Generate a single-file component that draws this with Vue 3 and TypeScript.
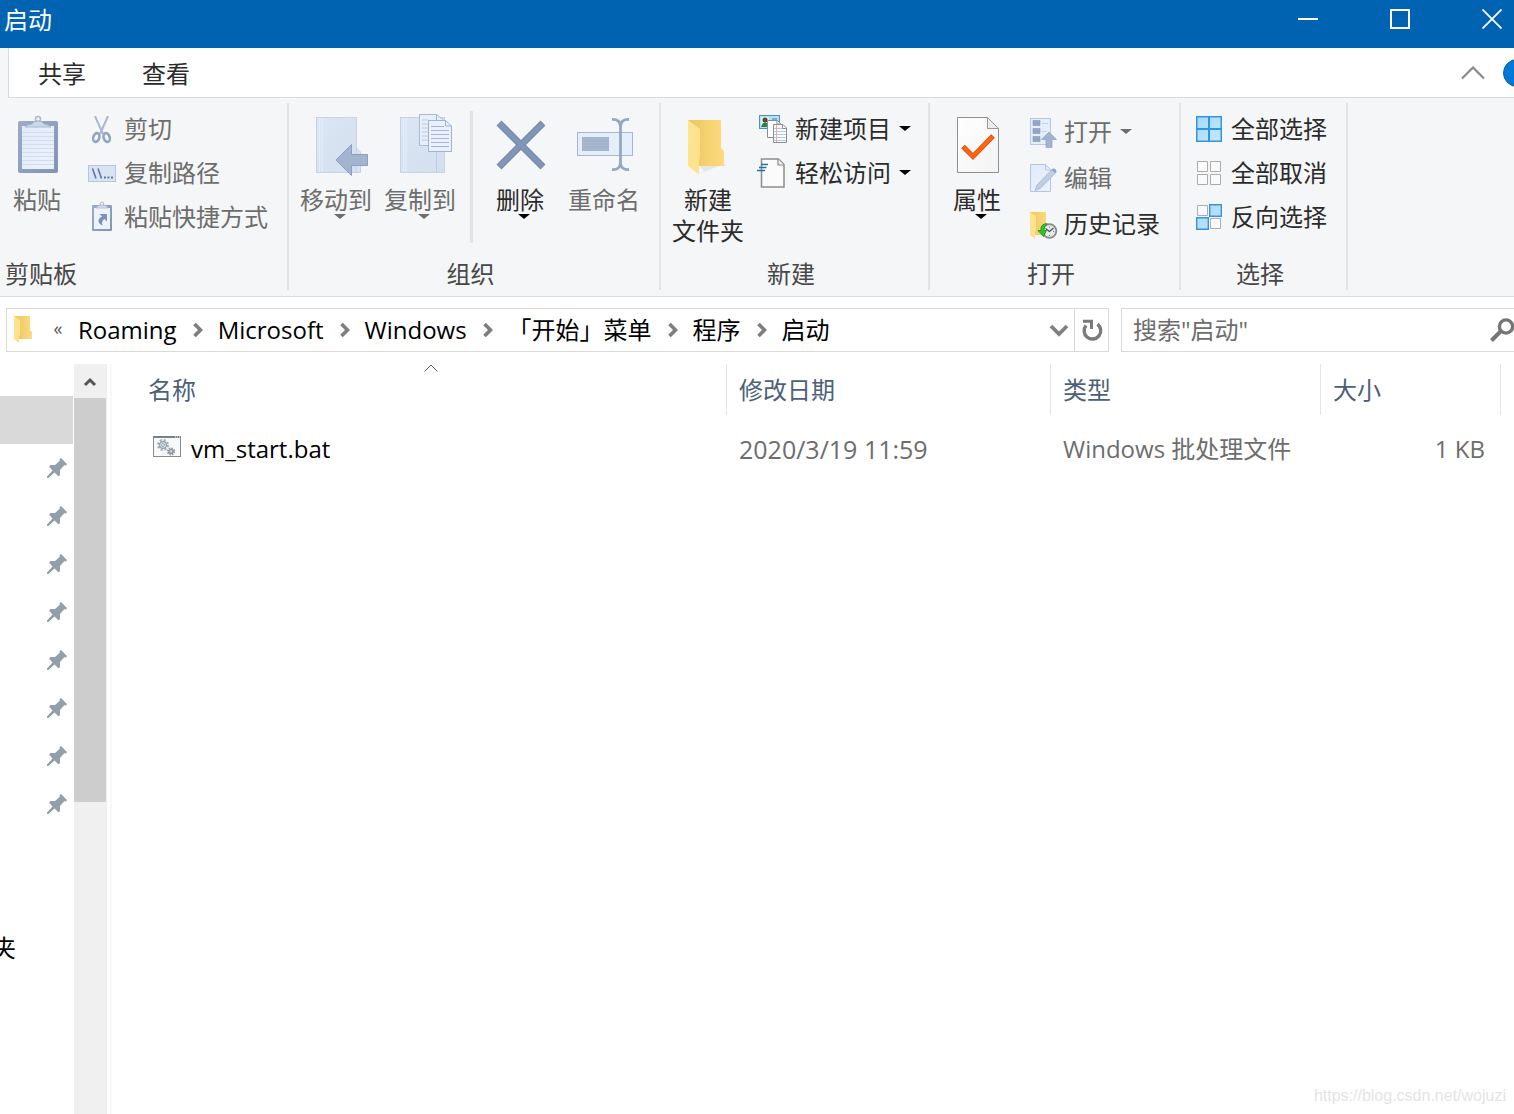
<script setup lang="ts">
interface Command {
  label: string
  icon: string
  disabled?: boolean
  menu?: boolean
}

interface FileRow {
  name: string
  date: string
  kind: string
  size: string
}

const clipboard: Command[] = [
  { label: '剪切', icon: 'cut', disabled: true },
  { label: '复制路径', icon: 'path', disabled: true },
  { label: '粘贴快捷方式', icon: 'shortcut', disabled: true },
]
const create: Command[] = [
  { label: '新建项目', icon: 'item', menu: true },
  { label: '轻松访问', icon: 'access', menu: true },
]
const open: Command[] = [
  { label: '打开', icon: 'open', disabled: true, menu: true },
  { label: '编辑', icon: 'edit', disabled: true },
  { label: '历史记录', icon: 'history' },
]
const select: Command[] = [
  { label: '全部选择', icon: 'all' },
  { label: '全部取消', icon: 'none' },
  { label: '反向选择', icon: 'invert' },
]

const crumbs: string[] = ['Roaming', 'Microsoft', 'Windows', '「开始」菜单', '程序', '启动']
const pinned = 8
const files: FileRow[] = [
  { name: 'vm_start.bat', date: '2020/3/19 11:59', kind: 'Windows 批处理文件', size: '1 KB' },
]
</script>

<template>
  <div class="window">
    <svg class="defs" aria-hidden="true">
      <defs>
        <linearGradient id="g-board" x1="0" y1="0" x2="1" y2="1">
          <stop offset="0" stop-color="#9dabc6" /><stop offset="1" stop-color="#8294b4" />
        </linearGradient>
        <linearGradient id="g-paper" x1="0" y1="0" x2="1" y2="1">
          <stop offset="0" stop-color="#e0eafa" /><stop offset="1" stop-color="#edf3fc" />
        </linearGradient>
        <linearGradient id="g-pale" x1="0" y1="0" x2="1" y2="1">
          <stop offset="0" stop-color="#dce6f4" /><stop offset="1" stop-color="#d3dfef" />
        </linearGradient>
        <linearGradient id="g-back" x1="0" y1="0" x2="1" y2="0">
          <stop offset="0" stop-color="#ecc65f" /><stop offset="1" stop-color="#fbdb80" />
        </linearGradient>
        <linearGradient id="g-flap" x1="0" y1="0" x2="1" y2="1">
          <stop offset="0" stop-color="#ffe592" /><stop offset="1" stop-color="#fde08a" />
        </linearGradient>
        <linearGradient id="g-page" x1="0" y1="0" x2="1" y2="1">
          <stop offset="0" stop-color="#ffffff" /><stop offset="1" stop-color="#f3f3f3" />
        </linearGradient>
        <linearGradient id="g-cell" x1="0" y1="0" x2="1" y2="1">
          <stop offset="0" stop-color="#a9dafc" /><stop offset="1" stop-color="#c3e7ff" />
        </linearGradient>
      </defs>

      <symbol id="folder" viewBox="0 0 20 28">
        <path d="M0 0H16V14L18 16V23H5Z" fill="url(#g-back)" />
        <path d="M0 0L6 4V19L5 20V27L0 23Z" fill="url(#g-flap)" />
      </symbol>

      <symbol id="cut" viewBox="0 0 28 28">
        <path d="M7 0L15 18M20 0L12 18" fill="none" stroke="#a9b8d0" stroke-width="2" />
        <ellipse cx="8.300" cy="21.500" rx="3" ry="4.500" transform="rotate(18 8.300 21.500)" fill="none" stroke="#92a4c4" stroke-width="2.600" />
        <ellipse cx="18.700" cy="21.500" rx="3" ry="4.500" transform="rotate(-18 18.700 21.500)" fill="none" stroke="#92a4c4" stroke-width="2.600" />
      </symbol>
      <symbol id="path" viewBox="0 0 28 28">
        <rect x=".5" y="5.500" width="27" height="16" fill="#d9e4f3" stroke="#b6c6dd" />
        <path d="M4.500 8.500L8 18.500M10 8.500L13.500 18.500" stroke="#5f76a0" stroke-width="1.600" fill="none" />
        <path d="M16 17.500h2M19.500 17.500h2M23 17.500h2" stroke="#5f76a0" stroke-width="2" />
      </symbol>
      <symbol id="shortcut" viewBox="0 0 28 28" overflow="visible">
        <circle cx="14" cy="0" r="1.800" fill="none" stroke="#a9b8d0" />
        <rect x="4" y="1" width="20" height="26" rx="1" fill="url(#g-board)" />
        <rect x="6" y="4" width="16" height="21" fill="#edf3fd" />
        <path d="M8 4Q9 1 14 1Q19 1 20 4Z" fill="#d6e0f0" stroke="#9fb0cc" stroke-width=".7" />
        <path d="M11.500 10H19V17.500L16.500 15Q13 17 14.500 21.500Q10 19.500 10.500 16Q11 13.500 14 12.500Z" fill="#7c91b8" />
      </symbol>
      <symbol id="item" viewBox="0 0 28 28" overflow="visible">
        <rect x=".5" y="-.5" width="20" height="13" fill="#b8e0f5" stroke="#4a93bd" />
        <rect x="2" y="1" width="8" height="10" fill="#dff0e4" />
        <circle cx="6" cy="4" r="2.500" fill="#5b4636" /><path d="M2 11Q3 6.500 6 6.500Q9 6.500 10 11Z" fill="#2f7d4f" />
        <path d="M13 3H18M13 6H18" stroke="#3181b4" />
        <path d="M8.500 4.500H18.500L21.500 7.500V21.500H8.500Z" fill="#fff" stroke="#8e8e8e" />
        <path d="M18 4.500V8H21.500" fill="none" stroke="#8e8e8e" />
        <path d="M14.500 8.500H24L27.500 12V26.500H14.500Z" fill="#fff" stroke="#8e8e8e" />
        <path d="M23.500 8.500V12.500H27.500" fill="none" stroke="#8e8e8e" />
        <path d="M15 12.500H23M15 15.500H27M15 18.500H27M15 21.500H27M15 24.500H27" stroke="#a9cbf0" />
        <path d="M17.500 9V26" stroke="#f0a8a8" />
      </symbol>
      <symbol id="access" viewBox="0 0 28 28" overflow="visible">
        <path d="M2.500 -1H19.500L25 4.500V27H2.500Z" fill="#fbfbfb" stroke="#8d8d8d" stroke-width="1.500" />
        <path d="M19 -1V5H25" fill="#eee" stroke="#8d8d8d" stroke-width="1.200" />
        <path d="M2 4.500H9M0 7.500H7.500M-2 10.500H6" stroke="#256fa8" stroke-width="1.500" />
      </symbol>
      <symbol id="open" viewBox="0 0 28 28" overflow="visible">
        <rect x="2.500" y="-.5" width="20" height="26" fill="#e4edfa" stroke="#b9c8df" />
        <path d="M5 1.500h7v5H5zM5 9.500h7v5H5zM5 17.500h7v5H5z" fill="#94a6c6" stroke="#8497ba" stroke-width=".6" />
        <path d="M14 4.500H20M14 12.500H18" stroke="#c3d0e4" />
        <path d="M21 13L28.500 20.500H24V28.500H18V20.500H13.500Z" fill="#a3b2ce" stroke="#8fa1c2" stroke-width=".7" />
      </symbol>
      <symbol id="edit" viewBox="0 0 28 28" overflow="visible">
        <path d="M2.500 -.5H17.500L22.500 4.500V26.500H2.500Z" fill="url(#g-paper)" stroke="#b5c5de" />
        <path d="M17.500 -.5V5H22.500" fill="none" stroke="#b5c5de" />
        <path d="M7 25.500L9 20L24.500 4L28 7.500L12 23.500Z" fill="#c0cee4" stroke="#9fb1ce" stroke-width=".8" />
        <path d="M23.500 5L25 3.500Q28 3 28.500 6.500L27 8Z" fill="#92a5c6" />
      </symbol>
      <symbol id="history" viewBox="0 0 28 28" overflow="visible">
        <path d="M2 1H18V15L19 16V24H7Z" fill="url(#g-back)" />
        <path d="M2 1L8 5V20L7 21V28L2 24Z" fill="url(#g-flap)" />
        <circle cx="21.500" cy="20" r="6.800" fill="#e6e8e9" stroke="#868b8e" stroke-width="1.800" />
        <path d="M17.500 17.500L21.500 20.500L25.500 17" fill="none" stroke="#4c5052" stroke-width="1.200" />
        <path d="M21.500 15.500v1M21.500 24v1M17 20.500h1M25 20.500h1" stroke="#6d7173" />
        <path d="M19 12.500Q12 13 13 19.500H10L15.500 25.500L18.500 19.500H16Q15.500 16 19 12.500Z" fill="#2fc42f" stroke="#17911a" stroke-width=".8" />
      </symbol>
      <symbol id="all" viewBox="0 0 28 28">
        <rect x="1" y="0" width="26" height="26" fill="#3295e0" />
        <path d="M2.500 1.500h10.500v10.500h-10.500zM15 1.500h10.500v10.500H15zM2.500 14h10.500v10.500h-10.500zM15 14h10.500v10.500H15z" fill="url(#g-cell)" />
      </symbol>
      <symbol id="none" viewBox="0 0 28 28">
        <path d="M2.500 1.500h10v10h-10zM15.500 1.500h10v10h-10zM2.500 14.500h10v10h-10zM15.500 14.500h10v10h-10z" fill="#fafafa" stroke="#acacac" />
      </symbol>
      <symbol id="invert" viewBox="0 0 28 28">
        <path d="M2.500 1.500h10v10h-10zM15.500 14.500h10v10h-10z" fill="#fafafa" stroke="#acacac" />
        <path d="M14.700 .7h11.600v11.600H14.700zM1.700 13.700h11.600v11.600H1.700z" fill="#b5dffd" stroke="#3295e0" stroke-width="1.400" />
      </symbol>
      <symbol id="pin" viewBox="0 0 20 20">
        <path d="M14 0L20 6L19 7.500L17.500 7L13 12V17L11.500 18.500L7.500 14.500L1.500 20H0V18.500L5.500 12.500L2 8.500L3.500 7H8L13 2.500L12.500 1Z" fill="#939fa6" />
      </symbol>
    </svg>

    <header class="titlebar">
      <h1 class="title">启动</h1>
      <div class="controls">
        <button type="button" aria-label="最小化"><svg width="20" height="20"><path d="M0 10H20" stroke="#fff" stroke-width="2" /></svg></button>
        <button type="button" aria-label="最大化"><svg width="20" height="20"><rect x="1" y="1" width="18" height="18" fill="none" stroke="#fff" stroke-width="2" /></svg></button>
        <button type="button" aria-label="关闭"><svg width="20" height="20"><path d="M.5 .5L19.500 19.500M19.500 .5L.5 19.500" stroke="#fff" stroke-width="1.800" /></svg></button>
      </div>
    </header>

    <nav class="tabs">
      <button type="button" class="tab">共享</button>
      <button type="button" class="tab">查看</button>
      <button type="button" class="collapse" aria-label="折叠功能区">
        <svg width="24" height="14"><path d="M1 12.500L12 1.500L23 12.500" fill="none" stroke="#8a8a8a" stroke-width="2.200" /></svg>
      </button>
      <button type="button" class="help" aria-label="帮助">
        <svg width="28" height="28"><circle cx="14" cy="14" r="13.500" fill="#0078d7" stroke="#0a5ea8" /></svg>
      </button>
    </nav>

    <section class="ribbon">
      <div class="group clipboard">
        <div class="body">
          <button type="button" class="large paste" disabled>
            <svg class="big" viewBox="0 0 64 64">
              <rect x="13" y="8" width="40" height="52" rx="2" fill="url(#g-board)" />
              <rect x="17" y="13" width="32" height="43" fill="url(#g-paper)" />
              <path d="M17 19.500H49M17 23.500H49M17 27.500H49M17 31.500H49M17 35.500H49M17 39.500H49M17 43.500H49M17 47.500H49M17 51.500H49" stroke="#d3dded" />
              <circle cx="33" cy="6" r="2.500" fill="none" stroke="#a9b8d0" stroke-width="1.500" />
              <path d="M20 14Q22 11.500 27 11Q28.500 8 33 8Q37.500 8 39 11Q44 11.500 46 14Z" fill="#ccd7e8" stroke="#9fb0cb" stroke-width=".8" />
            </svg>
            <span>粘贴</span>
          </button>
          <ul class="small-list">
            <li v-for="c in clipboard" :key="c.label">
              <button type="button" class="small" :disabled="c.disabled">
                <svg class="ico"><use :href="'#' + c.icon" /></svg><span>{{ c.label }}</span>
              </button>
            </li>
          </ul>
        </div>
        <div class="caption">剪贴板</div>
      </div>

      <div class="group organize">
        <div class="body">
          <button type="button" class="large" disabled>
            <svg class="big" viewBox="0 0 64 64">
              <path d="M48.500 39L52.500 35L56.500 39V59.500H48.500Z" fill="#d9e3f2" stroke="#c3d1e6" />
              <rect x="12.500" y="4.500" width="40" height="55" fill="url(#g-pale)" stroke="#c6d4e8" />
              <path d="M15.500 5V59M18 5V59" stroke="#e6eefa" />
              <path d="M32 47L47.500 31.500V41.500H63.500V52.500H47.500V62.500Z" fill="#a4b3ce" stroke="#8c9fc1" />
            </svg>
            <span>移动到</span><i class="caret"></i>
          </button>
          <button type="button" class="large" disabled>
            <svg class="big" viewBox="0 0 64 64">
              <rect x="12.500" y="4.500" width="44" height="55" fill="url(#g-pale)" stroke="#c6d4e8" />
              <path d="M15.500 5V59M18 5V59" stroke="#e6eefa" /><path d="M48.500 30V59" stroke="#bccbe2" />
              <path d="M31.500 1.500H48.500L55.500 7V32.500H31.500Z" fill="#e7effb" stroke="#a8bad5" />
              <path d="M34 7H40M34 11H40M34 15H40M34 19H40M34 23H40M34 27H40" stroke="#b8c7df" />
              <path d="M40.500 7.500H57.500L63.500 13V38.500H40.500Z" fill="#eaf1fc" stroke="#9fb2cf" />
              <path d="M48.500 1.500V7.500M57.500 7.500V13H63.500" fill="none" stroke="#9fb2cf" />
              <path d="M43 13.500H56M43 17.500H61M43 21.500H61M43 25.500H61M43 29.500H61M43 33.500H61" stroke="#a5b5cf" />
            </svg>
            <span>复制到</span><i class="caret"></i>
          </button>
          <div class="divider"></div>
          <button type="button" class="large">
            <svg class="big" viewBox="0 0 64 64">
              <path d="M11 10L55 54M55 10L11 54" stroke="#7389b0" stroke-width="7" />
              <path d="M11.500 10.500L54.500 53.500M54.500 10.500L11.500 53.500" stroke="#8195b7" stroke-width="5" />
            </svg>
            <span>删除</span><i class="caret"></i>
          </button>
          <button type="button" class="large" disabled>
            <svg class="big" viewBox="0 0 64 64">
              <rect x="5.500" y="19.500" width="55" height="23" fill="#e5eefb" stroke="#a5b7d3" />
              <rect x="10" y="24" width="27" height="14" fill="#a5b4cf" />
              <path d="M40 6.500Q48.500 6 48.500 14V49.500Q48.500 57 40 56.500M57 6.500Q48.500 6 48.500 14V49.500Q48.500 57 57 56.500" fill="none" stroke="#95a7c6" stroke-width="2.800" />
            </svg>
            <span>重命名</span>
          </button>
        </div>
        <div class="caption">组织</div>
      </div>

      <div class="group create">
        <div class="body">
          <button type="button" class="large">
            <svg class="big" viewBox="0 0 64 64">
              <path d="M23 61L28 58L24 53H51L48 51Z" fill="#e6e6e6" />
              <path d="M12 7H45V35L48 38V53H23Z" fill="url(#g-back)" />
              <path d="M12 7L24 16V45L23 47V61.500L12 53Z" fill="url(#g-flap)" />
            </svg>
            <span>新建<br />文件夹</span>
          </button>
          <ul class="small-list">
            <li v-for="c in create" :key="c.label">
              <button type="button" class="small" :disabled="c.disabled">
                <svg class="ico"><use :href="'#' + c.icon" /></svg><span>{{ c.label }}</span><i class="caret"></i>
              </button>
            </li>
          </ul>
        </div>
        <div class="caption">新建</div>
      </div>

      <div class="group open">
        <div class="body">
          <button type="button" class="large">
            <svg class="big" viewBox="0 0 64 64">
              <path d="M12.500 4.500H42.500L53.500 15.500V59.500H12.500Z" fill="url(#g-page)" stroke="#8f8f8f" />
              <path d="M42.500 4.500V15.500H53.500Z" fill="#ececec" stroke="#9a9a9a" />
              <path d="M18 33.500L28 43.500L48 23" fill="none" stroke="#d9480a" stroke-width="5" />
              <path d="M18.500 34L28 43.500L47.500 23.500" fill="none" stroke="#ff6511" stroke-width="3.600" />
            </svg>
            <span>属性</span><i class="caret"></i>
          </button>
          <ul class="small-list roomy">
            <li v-for="c in open" :key="c.label">
              <button type="button" class="small" :disabled="c.disabled">
                <svg class="ico"><use :href="'#' + c.icon" /></svg><span>{{ c.label }}</span><i v-if="c.menu" class="caret"></i>
              </button>
            </li>
          </ul>
        </div>
        <div class="caption">打开</div>
      </div>

      <div class="group select">
        <div class="body">
          <ul class="small-list">
            <li v-for="c in select" :key="c.label">
              <button type="button" class="small">
                <svg class="ico"><use :href="'#' + c.icon" /></svg><span>{{ c.label }}</span>
              </button>
            </li>
          </ul>
        </div>
        <div class="caption">选择</div>
      </div>
    </section>

    <div class="location">
      <div class="address">
        <svg class="folder" width="20" height="28"><use href="#folder" /></svg>
        <button type="button" class="overflow">«</button>
        <ol class="crumbs">
          <li v-for="(crumb, i) in crumbs" :key="crumb">
            <svg v-if="i > 0" width="10" height="16"><path d="M1.500 2L7.500 8L1.500 14" fill="none" stroke="#7d7d7d" stroke-width="3.600" /></svg>
            <a href="#">{{ crumb }}</a>
          </li>
        </ol>
        <button type="button" class="drop" aria-label="以前的位置">
          <svg width="20" height="14"><path d="M2 2L10 10L18 2" fill="none" stroke="#808080" stroke-width="3.800" /></svg>
        </button>
        <button type="button" class="refresh" aria-label="刷新">
          <svg width="22" height="24">
            <path d="M16.500 6.200A8.300 8.300 0 1 1 5 7.500" fill="none" stroke="#7a7a7a" stroke-width="3.400" />
            <path d="M2 3.200H10.500V11" fill="none" stroke="#7a7a7a" stroke-width="3" />
          </svg>
        </button>
      </div>
      <form class="search" @submit.prevent>
        <input type="search" aria-label="搜索" placeholder='搜索"启动"' />
        <svg width="24" height="24">
          <path d="M1.500 22.500L10.500 13.500" stroke="#757575" stroke-width="4" />
          <circle cx="16" cy="8.500" r="6.600" fill="none" stroke="#757575" stroke-width="3.400" />
        </svg>
      </form>
    </div>

    <main class="content">
      <nav class="tree" aria-label="快速访问">
        <a href="#" class="node current" aria-label="快速访问"></a>
        <a v-for="n in pinned" :key="n" href="#" class="node" aria-label="已固定的文件夹">
          <svg width="20" height="20"><use href="#pin" /></svg>
        </a>
        <a href="#" class="node last"><span>夹</span></a>
      </nav>
      <div class="scrollbar">
        <button type="button" aria-label="向上滚动">
          <svg width="14" height="12"><path d="M2 10L7 5L12 10" fill="none" stroke="#555" stroke-width="3" /></svg>
        </button>
        <div class="thumb"></div>
      </div>
      <div class="list">
        <table>
          <colgroup>
            <col /><col class="c-date" /><col class="c-kind" /><col class="c-size" />
          </colgroup>
          <thead>
            <tr>
              <th scope="col" class="name">
                名称
                <svg class="sort" width="14" height="8"><path d="M.5 7.500L7 1L13.500 7.500" fill="none" stroke="#5a5a5a" /></svg>
              </th>
              <th scope="col">修改日期</th>
              <th scope="col">类型</th>
              <th scope="col">大小</th>
            </tr>
          </thead>
          <tbody>
            <tr v-for="f in files" :key="f.name">
              <td class="name">
                <div class="file">
                  <svg width="28" height="21">
                    <rect x=".5" y=".5" width="27" height="20" fill="#f8f9fa" stroke="#868b8e" />
                    <path d="M0 1H28" stroke="#7b8083" stroke-width="2" />
                    <path d="M22 1h1M24 1h1M26 1h1" stroke="#fff" />
                    <circle cx="10" cy="9" r="4.800" fill="none" stroke="#a4b0b9" stroke-width="2.400" stroke-dasharray="2.200 1.570" />
                    <circle cx="10" cy="9" r="3.400" fill="#dbe2e7" stroke="#94a1ab" stroke-width="1.200" /><circle cx="10" cy="9" r="1.400" fill="#fff" stroke="#94a1ab" />
                    <circle cx="18" cy="15.500" r="3.200" fill="none" stroke="#8b97a0" stroke-width="1.800" stroke-dasharray="1.500 1.010" />
                    <circle cx="18" cy="15.500" r="2" fill="#cfd7dc" stroke="#7f8c96" stroke-width="1.200" />
                  </svg>
                  <span>{{ f.name }}</span>
                </div>
              </td>
              <td class="date">{{ f.date }}</td>
              <td>{{ f.kind }}</td>
              <td class="size">{{ f.size }}</td>
            </tr>
          </tbody>
        </table>
      </div>
    </main>

    <div class="watermark">https://blog.csdn.net/wojuzi</div>
  </div>
</template>

<style>
body {
  margin: 0;
  background: #fff;
}
</style>

<style scoped>
.window {
  position: relative;
  display: flex;
  flex-direction: column;
  min-height: 100vh;
  overflow: hidden;
  background: #fff;
  color: #000;
  font: 24px/32px "Open Sans", "Noto Sans CJK SC", sans-serif;
}
.defs {
  position: absolute;
  width: 0;
  height: 0;
}
button {
  margin: 0;
  padding: 0;
  border: 0;
  background: none;
  color: inherit;
  font: inherit;
}
ul,
ol {
  margin: 0;
  padding: 0;
  list-style: none;
}
a {
  color: inherit;
  text-decoration: none;
}
svg {
  display: block;
  flex: none;
}

.titlebar {
  display: flex;
  justify-content: space-between;
  height: 48px;
  background: #0063b1;
  color: #fff;
}
.title {
  margin: 0;
  padding: 4px 0 0 4px;
  font-size: 24px;
  font-weight: 400;
  line-height: 32px;
}
.controls {
  display: flex;
  align-items: flex-start;
  gap: 72px;
  padding: 9px 12px 0 0;
}

.tabs {
  display: flex;
  align-items: center;
  height: 49px;
  margin-left: 8px;
  border-left: 1px solid #dadbdc;
  border-bottom: 1px solid #dadbdc;
  box-shadow: -8px 0 0 #f5f6f7;
  color: #2b2b2b;
}
.tab {
  width: 104px;
  padding: 2px 0 0 2px;
}
.collapse {
  margin-left: auto;
}
.help {
  width: 11px;
  margin-left: 18px;
  overflow: hidden;
}

.ribbon {
  display: flex;
  padding: 5px 0 6px;
  border-bottom: 1px solid #dadbdc;
  background: #f5f6f7;
  color: #2b2b2b;
}
.group {
  display: flex;
  flex-direction: column;
  height: 187px;
  padding-left: 5px;
  border-right: 2px solid #e2e3e4;
  box-sizing: border-box;
  flex: none;
}
.clipboard {
  width: 289px;
}
.organize {
  width: 372px;
}
.create {
  width: 269px;
}
.open {
  width: 251px;
}
.select {
  width: 167px;
}
.body {
  display: flex;
  align-items: flex-start;
  flex: 1;
}
.caption {
  padding-right: 12px;
  color: #474747;
  text-align: center;
}
.clipboard .caption {
  text-align: left;
}
.large {
  display: flex;
  flex-direction: column;
  align-items: center;
  width: 84px;
  padding-top: 10px;
  line-height: 31px;
  white-space: nowrap;
}
.paste {
  width: 64px;
}
.big {
  width: 64px;
  height: 64px;
  margin-bottom: 7px;
}
button:disabled {
  color: #6d6d6d;
}
.caret {
  width: 0;
  height: 0;
  border: 6px solid transparent;
  border-top: 5px solid #000;
  border-bottom: 0;
}
.large .caret {
  margin: -1px 0 0 8px;
}
.small .caret {
  margin-bottom: 4px;
}
button:disabled .caret {
  border-top-color: #6d6d6d;
}
.divider {
  width: 3px;
  height: 132px;
  margin: 8px 5px 0 8px;
  background: #e2e3e4;
}
.small-list {
  padding: 5px 0 0 9px;
}
.clipboard .small-list {
  padding-left: 19px;
}
.small {
  display: flex;
  align-items: center;
  gap: 8px;
  height: 44px;
  white-space: nowrap;
}
.small span {
  padding-bottom: 2px;
}
.roomy {
  padding-top: 7px;
}
.roomy .small {
  height: 46px;
}
.ico {
  width: 28px;
  height: 28px;
  overflow: visible;
}

.location {
  display: flex;
  gap: 12px;
  padding: 11px 0 12px 6px;
}
.address {
  display: flex;
  align-items: center;
  flex: 1;
  height: 44px;
  padding-left: 7px;
  border: 1px solid #d9d9d9;
  box-sizing: border-box;
}
.overflow {
  width: 22px;
  margin: 0 9px 0 13px;
  padding-bottom: 4px;
  color: #555;
  font-size: 18px;
}
.crumbs {
  display: flex;
  flex: 1;
}
.crumbs li {
  display: flex;
  align-items: center;
}
.crumbs svg {
  margin: 0 15px 0 16px;
}
.drop {
  padding: 2px 5px 0 0;
}
.refresh {
  display: flex;
  align-items: center;
  justify-content: center;
  align-self: stretch;
  width: 34px;
  border-left: 1px solid #d9d9d9;
}
.search {
  display: flex;
  align-items: center;
  width: 393px;
  height: 44px;
  padding-left: 11px;
  border: 1px solid #d9d9d9;
  border-right: 0;
  box-sizing: border-box;
}
.search input {
  flex: 1;
  min-width: 0;
  padding: 0;
  border: 0;
  outline: 0;
  background: none;
  color: #000;
  font: inherit;
}
.search input::placeholder {
  color: #6d6d6d;
  opacity: 1;
}

.content {
  display: flex;
  flex: 1;
}
.tree {
  width: 74px;
  padding-top: 32px;
  box-sizing: border-box;
  overflow: hidden;
}
.node {
  display: flex;
  align-items: center;
  justify-content: flex-end;
  height: 48px;
  padding-right: 7px;
}
.current {
  margin-right: 1px;
  background: #d9d9d9;
}
.last {
  justify-content: flex-start;
  margin: 96px 0 0 -8px;
}
.scrollbar {
  width: 33px;
  background: #f0f0f0;
}
.scrollbar button {
  display: flex;
  align-items: center;
  justify-content: center;
  width: 32px;
  height: 34px;
}
.thumb {
  width: 32px;
  height: 404px;
  background: #cdcdcd;
}
.list {
  flex: 1;
  margin-left: 3px;
  border-left: 2px solid #f9f9f9;
}
table {
  width: 100%;
  padding-right: 13px;
  border-spacing: 0;
  table-layout: fixed;
}
.c-date {
  width: 324px;
}
.c-kind {
  width: 270px;
}
.c-size {
  width: 180px;
}
th {
  height: 51px;
  padding: 0 0 0 12px;
  border-right: 1px solid #e5e5e5;
  box-sizing: border-box;
  color: #4c607a;
  font-weight: 400;
  text-align: left;
}
td {
  height: 68px;
  padding: 0 0 0 12px;
  color: #6d6d6d;
}
th.name {
  position: relative;
  padding-left: 36px;
}
td.name {
  padding-left: 41px;
  color: #000;
}
.sort {
  position: absolute;
  top: 0;
  left: 312px;
}
.file {
  display: flex;
  align-items: center;
  gap: 10px;
}
.file svg {
  margin-bottom: 5px;
}
.date {
  font-size: 25px;
}
td.size {
  padding-right: 16px;
  text-align: right;
}
.watermark {
  position: absolute;
  right: 8px;
  bottom: 8px;
  color: #e4e4e4;
  font: 16px/20px "Liberation Sans", sans-serif;
}
</style>
